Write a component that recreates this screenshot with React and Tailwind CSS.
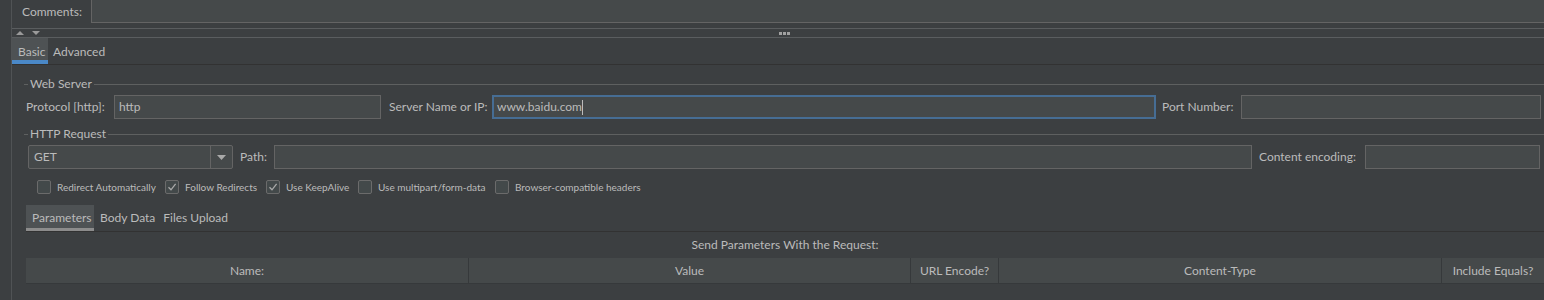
import React from "react";

const font = { fontFamily: 'Lato, "Noto Sans", sans-serif' };

function Field({ w, value, focused, caret }) {
  return (
    <div
      className={
        "h-[24px] shrink-0 flex items-center bg-[#45494a] " +
        (focused ? "border-2 border-[#466d94] pl-[3px]" : "border border-[#646464] pl-[4px]")
      }
      style={{ width: w }}
    >
      <span className="text-[12px] text-[#bbbbbb] leading-none">{value}</span>
      {caret && <span className="w-px h-[15px] bg-[#bbbbbb]" />}
    </div>
  );
}

function Label({ w, ml, children }) {
  return (
    <div className="shrink-0 text-[12px] text-[#bbbbbb] whitespace-nowrap" style={{ width: w, marginLeft: ml }}>
      {children}
    </div>
  );
}

function TitledBorder({ title }) {
  return (
    <div className="flex items-center h-[14px] ml-[12px]">
      <div className="w-[4px] h-px bg-[#5e6060]" />
      <span className="px-[2px] text-[12px] text-[#bbbbbb] leading-none">{title}</span>
      <div className="flex-1 h-px bg-[#5e6060]" />
    </div>
  );
}

function Check({ w, label, checked }) {
  return (
    <div className="shrink-0 flex items-center" style={{ width: w }}>
      <div className="w-[14px] h-[14px] border border-[#6b6b6b] rounded-[2px] bg-[#43494a] flex items-center justify-center">
        {checked && (
          <svg width="10" height="10" viewBox="0 0 10 10">
            <path d="M1.5 5.2 L4 7.8 L8.6 1.8" fill="none" stroke="#a9a9a9" strokeWidth="1.3" />
          </svg>
        )}
      </div>
      <span className="ml-[6px] text-[10px] text-[#bbbbbb] whitespace-nowrap">{label}</span>
    </div>
  );
}

export default function App() {
  return (
    <div className="w-[1544px] h-[300px] bg-[#3c3f41] flex overflow-hidden select-none" style={font}>
      {/* left gutter */}
      <div className="w-[12px] shrink-0 border-r border-[#505355]" />
      <div className="flex-1 flex flex-col min-w-0">
        {/* comments row */}
        <div className="h-[23px] flex shrink-0">
          <div className="w-[79px] pl-[10px] flex items-center text-[12px] text-[#bbbbbb]">Comments:</div>
          <div className="flex-1 bg-[#45494a] border-l border-b border-[#646464]" />
        </div>
        <div className="h-[5px] shrink-0" />
        {/* split divider */}
        <div className="h-[10px] shrink-0 border-y border-[#5a5d5f] relative flex items-center">
          <svg width="26" height="8" viewBox="0 0 26 8" className="ml-[4px]">
            <path d="M0 6 L4 2 L8 6 Z" fill="#9a9a9a" />
            <path d="M16 2 L24 2 L20 6 Z" fill="#9a9a9a" />
          </svg>
          <svg width="12" height="3" viewBox="0 0 12 3" className="absolute left-[767px] top-[3px]">
            <rect x="0" y="0" width="3" height="3" fill="#a0a0a0" />
            <rect x="4" y="0" width="3" height="3" fill="#a0a0a0" />
            <rect x="8" y="0" width="3" height="3" fill="#a0a0a0" />
          </svg>
        </div>
        {/* basic / advanced tabs */}
        <div className="h-[27px] shrink-0 flex border-b border-[#323232]">
          <div className="w-[36px] bg-[#4e5254] border-b-4 border-[#4a88c7] flex items-center pl-[6px] pt-[5px] text-[12px] text-[#bbbbbb]">
            Basic
          </div>
          <div className="ml-[5px] flex items-center text-[12px] text-[#bbbbbb] pt-[1px]">Advanced</div>
        </div>

        {/* web server */}
        <div className="h-[12px] shrink-0" />
        <TitledBorder title="Web Server" />
        <div className="h-[4px] shrink-0" />
        <div className="flex items-center h-[24px] shrink-0">
          <Label w={88} ml={14}>Protocol [http]:</Label>
          <Field w={267} value="http" />
          <Label w={103} ml={8}>Server Name or IP:</Label>
          <Field w={664} value="www.baidu.com" focused caret />
          <Label w={79} ml={6}>Port Number:</Label>
          <Field w={300} value="" />
        </div>

        {/* http request */}
        <div className="h-[8px] shrink-0" />
        <TitledBorder title="HTTP Request" />
        <div className="h-[4px] shrink-0" />
        <div className="flex items-center h-[24px] shrink-0">
          <div className="ml-[16px] w-[205px] h-[24px] shrink-0 flex bg-[#45494a] border border-[#646464] rounded-[2px]">
            <div className="flex-1 flex items-center pl-[5px] text-[12px] text-[#bbbbbb]">GET</div>
            <div className="w-[22px] border-l border-[#646464] flex items-center justify-center">
              <svg width="9" height="5" viewBox="0 0 9 5">
                <path d="M0 0 L9 0 L4.5 5 Z" fill="#a9a9a9" />
              </svg>
            </div>
          </div>
          <Label w={34} ml={7}>Path:</Label>
          <Field w={978} value="" />
          <Label w={106} ml={7}>Content encoding:</Label>
          <Field w={175} value="" />
        </div>

        {/* options */}
        <div className="h-[11px] shrink-0" />
        <div className="flex items-center h-[14px] shrink-0 pl-[25px]">
          <Check w={128} label="Redirect Automatically" />
          <Check w={101} label="Follow Redirects" checked />
          <Check w={92} label="Use KeepAlive" checked />
          <Check w={137} label="Use multipart/form-data" />
          <Check w={200} label="Browser-compatible headers" />
        </div>

        {/* parameter tabs */}
        <div className="h-[11px] shrink-0" />
        <div className="ml-[14px] h-[27px] shrink-0 flex border-b border-[#323232]">
          <div className="w-[68px] bg-[#4e5254] border-b-[3px] border-[#8c8c8c] flex items-center pl-[6px] pt-[3px] text-[12px] text-[#bbbbbb]">
            Parameters
          </div>
          <div className="ml-[6px] flex items-center text-[12px] text-[#bbbbbb]">Body Data</div>
          <div className="ml-[8px] flex items-center text-[12px] text-[#bbbbbb]">Files Upload</div>
        </div>

        <div className="ml-[14px] h-[26px] shrink-0 flex items-center justify-center text-[12px] text-[#bbbbbb]">
          Send Parameters With the Request:
        </div>
        <div className="ml-[14px] h-[26px] shrink-0 flex bg-[#45494a] border-b border-[#36393b] text-[12px] text-[#bbbbbb]">
          <div className="w-[443px] flex items-center justify-center border-r border-[#36393b]">Name:</div>
          <div className="w-[442px] flex items-center justify-center border-r border-[#36393b]">Value</div>
          <div className="w-[88px] flex items-center justify-center border-r border-[#36393b]">URL Encode?</div>
          <div className="w-[443px] flex items-center justify-center border-r border-[#36393b]">Content-Type</div>
          <div className="flex-1 flex items-center justify-center">Include Equals?</div>
        </div>
        <div className="flex-1" />
      </div>
    </div>
  );
}
